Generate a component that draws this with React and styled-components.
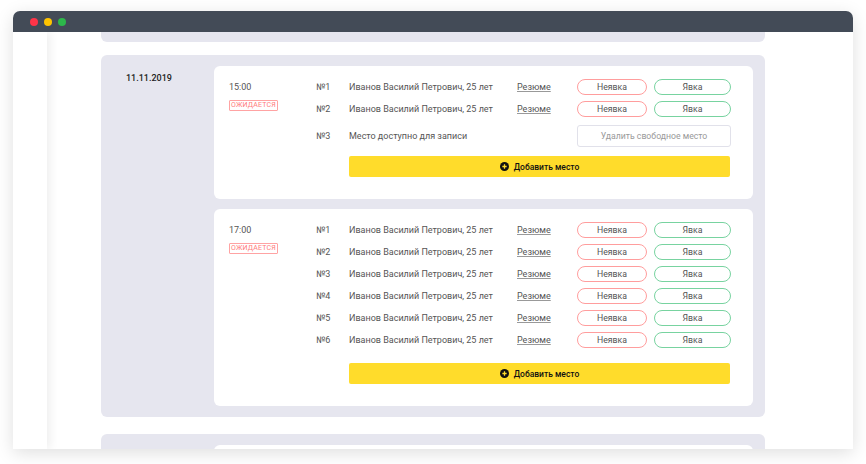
import styled, { createGlobalStyle } from 'styled-components';

const GlobalStyle = createGlobalStyle`
  html, body {
    margin: 0;
    background: #fff;
  }
  * {
    box-sizing: border-box;
  }
  body {
    font-family: Roboto, 'Liberation Sans', sans-serif;
  }
`;

const slots = [
  {
    time: '15:00',
    barGap: 3,
    rows: [
      { n: 1, name: 'Иванов Василий Петрович, 25 лет' },
      { n: 2, name: 'Иванов Василий Петрович, 25 лет' },
      { n: 3, free: true },
    ],
  },
  {
    time: '17:00',
    barGap: 9,
    rows: [1, 2, 3, 4, 5, 6].map((n) => ({ n, name: 'Иванов Василий Петрович, 25 лет' })),
  },
];

function App() {
  return (
    <Page>
      <GlobalStyle />
      <Window>
        <TitleBar>
          <Dot color='#ff3448' />
          <Dot color='#ffc400' />
          <Dot color='#2db84b' />
        </TitleBar>
        <Body>
          <Sidebar />
          <Content>
            <GroupTail />
            <Group>
              <DateCol>11.11.2019</DateCol>
              <Slots>
                {slots.map((slot) => (
                  <SlotCard key={slot.time}>
                    <TimeCol>
                      <Time>{slot.time}</Time>
                      <Badge>Ожидается</Badge>
                    </TimeCol>
                    <Rows>
                      {slot.rows.map((row) =>
                        row.free ? (
                          <Row key={row.n} tall>
                            <Num>№{row.n}</Num>
                            <Name>Место доступно для записи</Name>
                            <Spacer />
                            <DeleteBtn>Удалить свободное место</DeleteBtn>
                          </Row>
                        ) : (
                          <Row key={row.n}>
                            <Num>№{row.n}</Num>
                            <Name>{row.name}</Name>
                            <Resume href='#;'>Резюме</Resume>
                            <Pill tone='red'>Неявка</Pill>
                            <Pill tone='green'>Явка</Pill>
                          </Row>
                        )
                      )}
                      <AddBar gap={slot.barGap}>
                        <svg width='9' height='9' viewBox='0 0 10 10'>
                          <circle cx='5' cy='5' r='5' fill='#111' />
                          <path d='M5 2.6v4.8M2.6 5h4.8' stroke='#ffdc2b' strokeWidth='1.4' />
                        </svg>
                        Добавить место
                      </AddBar>
                    </Rows>
                  </SlotCard>
                ))}
              </Slots>
            </Group>
            <Group>
              <DateCol />
              <Slots>
                <SlotCard />
              </Slots>
            </Group>
          </Content>
        </Body>
      </Window>
    </Page>
  );
}

export default App;

const Page = styled.div`
  width: 866px;
  height: 464px;
  padding: 11px 13px 15px;
  overflow: hidden;
`;

const Window = styled.div`
  width: 840px;
  height: 438px;
  border-radius: 7px 7px 0 0;
  background: #fff;
  box-shadow: 0 4px 18px rgba(0, 0, 0, 0.13);
  display: flex;
  flex-direction: column;
  overflow: hidden;
`;

const TitleBar = styled.div`
  height: 21px;
  flex-shrink: 0;
  background: #434b57;
  display: flex;
  align-items: center;
  gap: 6px;
  padding-left: 17px;
`;

const Dot = styled.span`
  width: 8px;
  height: 8px;
  border-radius: 50%;
  background: ${(p) => p.color};
`;

const Body = styled.div`
  flex: 1;
  display: flex;
  overflow: hidden;
`;

const Sidebar = styled.div`
  width: 34px;
  flex-shrink: 0;
  background: #fff;
  position: relative;
  z-index: 1;
  box-shadow: 3px 0 9px rgba(0, 0, 0, 0.07);
`;

const Content = styled.div`
  flex: 1;
  padding-left: 54px;
  display: flex;
  flex-direction: column;
`;

const GroupTail = styled.div`
  width: 664px;
  height: 10px;
  flex-shrink: 0;
  background: #e6e6ef;
  border-radius: 0 0 6px 6px;
  margin-bottom: 13px;
`;

const Group = styled.div`
  width: 664px;
  flex-shrink: 0;
  background: #e6e6ef;
  border-radius: 6px;
  padding: 11px 12px 11px 25px;
  display: flex;
  margin-bottom: 17px;
`;

const DateCol = styled.div`
  width: 88px;
  flex-shrink: 0;
  padding-top: 7px;
  font-size: 9px;
  line-height: 11px;
  font-weight: 500;
  color: #222;
`;

const Slots = styled.div`
  flex: 1;
  display: flex;
  flex-direction: column;
  gap: 10px;
`;

const SlotCard = styled.div`
  background: #fff;
  border-radius: 6px;
  padding: 13px 22px 22px 15px;
  display: flex;
  min-height: 40px;
`;

const TimeCol = styled.div`
  width: 87px;
  flex-shrink: 0;
`;

const Time = styled.div`
  font-size: 9px;
  line-height: 16px;
  color: #555;
`;

const Badge = styled.div`
  margin-top: 5px;
  width: 49px;
  height: 11px;
  border: 1px solid #ffa3a3;
  border-radius: 1px;
  color: #ff7b7b;
  font-size: 7px;
  line-height: 9px;
  text-align: center;
  text-transform: uppercase;
  letter-spacing: 0.2px;
`;

const Rows = styled.div`
  flex: 1;
  display: flex;
  flex-direction: column;
  gap: 6px;
`;

const Row = styled.div`
  display: flex;
  align-items: center;
  height: ${(p) => (p.tall ? '22px' : '16px')};
  margin-top: ${(p) => (p.tall ? '2px' : '0')};
  font-size: 9px;
  color: #555;
`;

const Num = styled.span`
  width: 33px;
  flex-shrink: 0;
`;

const Name = styled.span`
  width: 168px;
  flex-shrink: 0;
  white-space: nowrap;
`;

const Resume = styled.a`
  width: 60px;
  flex-shrink: 0;
  color: #555;
  text-decoration: underline;
  text-decoration-thickness: 1px;
  text-underline-offset: 1px;
  text-decoration-color: #999;
`;

const Spacer = styled.span`
  width: 60px;
  flex-shrink: 0;
`;

const Pill = styled.button`
  width: ${(p) => (p.tone === 'red' ? '70px' : '77px')};
  margin-left: ${(p) => (p.tone === 'red' ? '0' : '7px')};
  height: 16px;
  padding: 0;
  border-radius: 8px;
  border: 1px solid ${(p) => (p.tone === 'red' ? '#ff9d9d' : '#78d3a0')};
  background: #fff;
  font-family: inherit;
  font-size: 8.7px;
  color: #555;
`;

const DeleteBtn = styled.button`
  width: 154px;
  height: 22px;
  padding: 0;
  border: 1px solid #e1e1ea;
  border-radius: 3px;
  background: #fff;
  font-family: inherit;
  font-size: 8.7px;
  color: #999;
`;

const AddBar = styled.div`
  margin: ${(p) => p.gap}px 1px 0 33px;
  height: 21px;
  background: #ffdc2b;
  border-radius: 2px;
  display: flex;
  align-items: center;
  justify-content: center;
  gap: 5px;
  font-size: 8.5px;
  font-weight: 500;
  color: #111;
`;
